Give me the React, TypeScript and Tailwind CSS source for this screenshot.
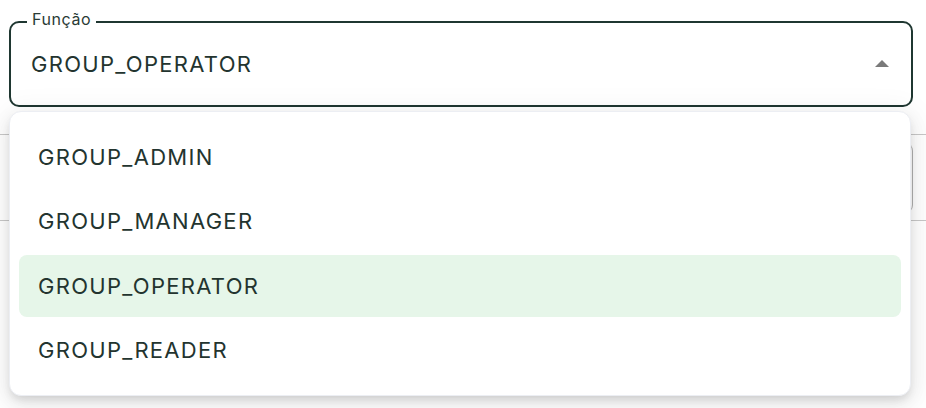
import React from "react";

export default function App() {
  const items = ["GROUP_ADMIN", "GROUP_MANAGER", "GROUP_OPERATOR", "GROUP_READER"];
  return (
    <div className="relative w-[926px] h-[408px] bg-white overflow-hidden" style={{ fontFamily: "Inter, 'Noto Sans', sans-serif" }}>
      {/* underlying page content */}
      <div className="flex flex-col pt-[21px]">
        <div className="px-[9px]">
          <div className="relative h-[86px] w-[904px] rounded-[10px] border-2 border-[#1f3731]">
            <span className="absolute left-[16px] top-[-14px] bg-white px-[5px] text-[16px] leading-[20px] tracking-[0.6px] text-[#2a3b36]">Função</span>
            <div className="flex h-full items-center pl-[20px] pr-[20px]">
              <span className="flex-1 text-[22px] tracking-[1.3px] text-[#23342f]">GROUP_OPERATOR</span>
              <svg width="14" height="8" viewBox="0 0 14 8" className="mr-[2px]">
                <path d="M0 7 L7 0 L14 7 Z" fill="#7a7a7a" />
              </svg>
            </div>
          </div>
        </div>
        <div className="mt-[27px] h-[87px] border-y border-[#c8c8c8] pr-[13px] pt-[8px]">
          <div className="h-[70px] rounded-r-[8px] border-r border-[#b0b0b0]" />
        </div>
      </div>

      {/* menu overlay */}
      <div className="absolute left-[9px] top-[111px] w-[902px] h-[285px] rounded-[12px] bg-white shadow-[0_5px_8px_-2px_rgba(0,0,0,0.12),0_8px_20px_2px_rgba(0,0,0,0.06),0_3px_28px_6px_rgba(0,0,0,0.05)] border border-[#eceef3]">
        <div className="flex flex-col gap-[2.5px] px-[9px] pt-[14px]">
          {items.map((it) => (
            <div
              key={it}
              className={
                "flex h-[62px] items-center rounded-[8px] pl-[19px] text-[22px] tracking-[1.3px] text-[#23342f] " +
                (it === "GROUP_OPERATOR" ? "bg-[#e6f6e9]" : "")
              }
            >
              {it}
            </div>
          ))}
        </div>
      </div>
    </div>
  );
}
